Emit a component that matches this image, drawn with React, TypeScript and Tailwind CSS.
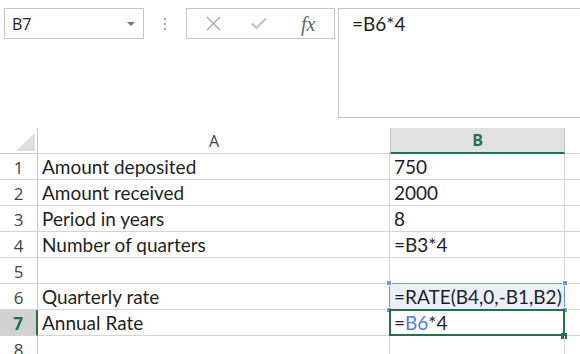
import React from "react";

const rows: [string, string, string][] = [
  ["1", "Amount deposited", "750"],
  ["2", "Amount received", "2000"],
  ["3", "Period in years", "8"],
  ["4", "Number of quarters", "=B3*4"],
  ["5", "", ""],
  ["6", "Quarterly rate", "=RATE(B4,0,-B1,B2)"],
  ["7", "Annual Rate", ""],
  ["8", "", ""],
];

const ui = "font-['Open_Sans',sans-serif]";
const cell = "font-['Lato',sans-serif] text-[19px] text-[#1f1f1f]";

function Handle({ pos, green }: { pos: string; green?: boolean }) {
  return (
    <span
      className={`absolute h-[6px] w-[6px] ${pos} ${
        green ? "bg-[#217346]" : "border border-white bg-[#6b95e8]"
      }`}
    />
  );
}

export default function App() {
  return (
    <div className="relative h-[354px] w-[580px] overflow-hidden bg-white">
      {/* formula bar area */}
      <div className="flex h-[118px] items-start pt-2">
        <div className={`ml-1 flex h-[31px] w-[140px] items-center justify-between border border-[#c6c6c6] pl-[7px] pr-[8px] text-[16px] text-[#222] ${ui}`}>
          <span>B7</span>
          <span className="h-0 w-0 border-x-[4px] border-t-[4px] border-x-transparent border-t-[#777]" />
        </div>
        <div className="flex h-[31px] w-[42px] flex-col items-center justify-center gap-[3px]">
          <span className="h-[2px] w-[2px] bg-[#a6a6a6]" />
          <span className="h-[2px] w-[2px] bg-[#a6a6a6]" />
          <span className="h-[2px] w-[2px] bg-[#a6a6a6]" />
        </div>
        <div className="flex h-[31px] w-[149px] items-center border border-[#c6c6c6]">
          <svg className="ml-[19px]" width="15" height="15" viewBox="0 0 15 15">
            <path d="M1 1L14 14M14 1L1 14" stroke="#a8a8a8" strokeWidth="1.4" fill="none" />
          </svg>
          <svg className="ml-[30px]" width="16" height="13" viewBox="0 0 16 13">
            <path d="M1 6.5L5.5 11L15 1.5" stroke="#c4c4c4" strokeWidth="2.2" fill="none" />
          </svg>
          <span className="ml-[34px] font-['Liberation_Serif',serif] text-[20px] italic text-[#666]">
            fx
          </span>
        </div>
        <div className="ml-[3px] h-[110px] flex-1 border border-r-0 border-[#c6c6c6] pl-[13px] pt-[1px]">
          <span className={cell}>=B6*4</span>
        </div>
      </div>

      {/* sheet */}
      <div className="mt-[10px]">
        <div className="flex h-[26px]">
          <div className="relative w-[38px] border-r border-b border-[#c6c6c6]">
            <svg className="absolute right-[2px] bottom-[2px]" width="19" height="18" viewBox="0 0 19 18">
              <path d="M19 0L19 18L0 18Z" fill="#dfdfdf" />
            </svg>
          </div>
          <div className={`flex w-[352px] items-center justify-center border-b border-[#d4d4d4] text-[16px] text-[#444] ${ui}`}>
            A
          </div>
          <div className={`flex w-[175px] items-center justify-center border-x border-b-2 border-x-[#c6c6c6] border-b-[#217346] bg-[#e1e1e1] text-[16px] font-bold text-[#217346] ${ui}`}>
            B
          </div>
          <div className="flex-1 border-b border-[#d4d4d4]" />
        </div>
        {rows.map(([n, a, b]) => {
          const sel = n === "7";
          const six = n === "6";
          return (
            <div key={n} className="flex h-[26px]">
              <div
                className={`flex w-[38px] items-center justify-center border-b border-[#d4d4d4] pt-[2px] text-[17px] ${ui} ${
                  sel
                    ? "border-r-2 border-r-[#217346] bg-[#d2d2d2] font-bold text-[#217346]"
                    : "border-r border-r-[#c6c6c6] text-[#444]"
                }`}
              >
                {n}
              </div>
              <div className={`flex w-[352px] items-center border-r border-b border-[#d4d4d4] pt-[2px] pl-1 ${cell}`}>
                {a}
              </div>
              <div
                className={`relative flex w-[175px] items-center border-r border-b border-[#d4d4d4] pt-[2px] pl-1 ${cell} ${
                  six ? "bg-[#eaf0fb]" : ""
                }`}
              >
                {sel ? (
                  <>
                    <span>
                      =<span className="text-[#4f7fdf]">B6</span>*4
                    </span>
                    <span className="absolute -top-px -left-px h-[27px] w-[176px] border-2 border-[#217346]" />
                    <Handle pos="-right-[3px] -bottom-[4px]" green />
                  </>
                ) : (
                  b
                )}
                {six && (
                  <>
                    <span className="absolute -top-px -left-px h-[27px] w-[176px] border border-[#6b95e8]" />
                    <Handle pos="-top-[4px] -left-[4px]" />
                    <Handle pos="-top-[4px] -right-[4px]" />
                    <Handle pos="-bottom-[4px] -left-[4px]" />
                    <Handle pos="-bottom-[4px] -right-[4px]" />
                  </>
                )}
              </div>
              <div className="flex-1 border-b border-[#d4d4d4]" />
            </div>
          );
        })}
      </div>
    </div>
  );
}
